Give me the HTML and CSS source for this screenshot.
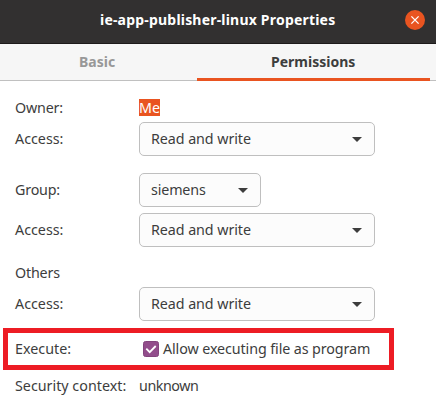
FILE: index.html
```
<!DOCTYPE html>
<html lang="en">
<head>
<meta charset="utf-8">
<title>ie-app-publisher-linux Properties</title>
<link rel="stylesheet" href="styles.css">
</head>
<body>
<header class="titlebar">
  <h1 class="title">ie-app-publisher-linux Properties</h1>
  <button class="close" aria-label="Close"><svg width="20" height="20" viewBox="0 0 20 20"><path d="M6.4 6.4l7.2 7.2M13.6 6.4l-7.2 7.2" stroke="#fff" stroke-width="1.3" fill="none"/></svg></button>
</header>
<nav class="tabs">
  <div class="tab"><span class="basic">Basic</span></div>
  <div class="tab active"><span>Permissions</span></div>
</nav>
<main class="form">
  <div class="row text"><span class="label owner">Owner:</span><span class="selected">Me</span></div>
  <div class="row"><span class="label access">Access:</span><div class="select"><span class="rw">Read and write</span><svg class="arrow" width="10" height="5" viewBox="0 0 10 5"><path d="M0 0h10L5 5z"/></svg></div></div>
  <div class="row section"><span class="label group">Group:</span><div class="select small"><span class="siemens">siemens</span><svg class="arrow" width="10" height="5" viewBox="0 0 10 5"><path d="M0 0h10L5 5z"/></svg></div></div>
  <div class="row"><span class="label access">Access:</span><div class="select"><span class="rw">Read and write</span><svg class="arrow" width="10" height="5" viewBox="0 0 10 5"><path d="M0 0h10L5 5z"/></svg></div></div>
  <div class="row text section"><span class="label others">Others</span></div>
  <div class="row"><span class="label access">Access:</span><div class="select"><span class="rw">Read and write</span><svg class="arrow" width="10" height="5" viewBox="0 0 10 5"><path d="M0 0h10L5 5z"/></svg></div></div>
  <div class="row execute"><span class="label exec">Execute:</span><svg class="check" width="16" height="16" viewBox="0 0 16 16"><rect x=".5" y=".5" width="15" height="15" rx="2" fill="#924d8b" stroke="#83447d"/><path d="M3.3 7.6l3.4 3.5 6-6.1" fill="none" stroke="#fff" stroke-width="1.8"/></svg><span class="allow">Allow executing file as program</span></div>
  <div class="row text"><span class="label context">Security context:</span><span class="unknown">unknown</span></div>
</main>
</body>
</html>
```

FILE: styles.css
```
* { box-sizing: border-box; }
body {
  margin: 0;
  height: 409px;
  overflow: hidden;
  background: #fff;
  color: #3d3d3d;
  font: 14.3px/17px "Noto Sans", "Open Sans", sans-serif;
  white-space: nowrap;
}
.titlebar {
  display: grid;
  grid-template-columns: 1fr 20px;
  align-items: center;
  height: 44px;
  padding: 0 11px 4px 0;
  background: #323030;
  border-bottom: 1px solid #1d1b1b;
}
.title {
  margin: 0 0 0 100px;
  color: #fff;
  font-size: 14px;
  font-weight: 700;
  letter-spacing: .2px;
  line-height: 18px;
}
.close {
  width: 20px;
  height: 20px;
  padding: 0;
  border: 0;
  border-radius: 50%;
  background: #e95420;
}
.close svg { display: block; }
.tabs {
  display: grid;
  grid-template-columns: 197px 233px;
  height: 37px;
  background: #f6f6f6;
  box-shadow: inset 0 -1px #c0c0c0;
  font-size: 14px;
  font-weight: 700;
}
.tab {
  padding: 9px 0 0 79px;
  color: #989898;
}
.tab.active {
  padding-left: 74px;
  color: #3d3d3d;
  border-bottom: 3px solid #e95420;
}
.form {
  display: flex;
  flex-direction: column;
  gap: 6px;
  padding: 18px 0 0;
}
.row {
  display: flex;
  align-items: center;
  height: 34px;
  padding-left: 15px;
}
.row.text { height: 17px; }
.row.section { margin-top: 11px; }
.label { width: 124px; }
.access, .group, .exec, .rw, .siemens, .allow { padding-bottom: 2px; }
.rw { letter-spacing: -.07px; }
.siemens { letter-spacing: -.15px; }
.allow { letter-spacing: -.1px; }
.unknown { letter-spacing: -.45px; }
.others { letter-spacing: -.2px; }
.owner, .group { letter-spacing: -.2px; }
.selected {
  width: 21px;
  background: #e95420;
  color: #fff;
}
.select {
  display: flex;
  align-items: center;
  justify-content: space-between;
  width: 236px;
  height: 34px;
  padding: 0 12px 0 11px;
  border: 1px solid #bfbfbf;
  border-radius: 5px;
  background: #fcfcfc;
}
.select.small { width: 122px; }
.arrow { fill: #3d3d3d; }
.row.execute {
  width: 391px;
  height: 42px;
  margin: 1px 0 1px 3px;
  padding-left: 7px;
  border: 5px solid #ed1c24;
}
.check { margin: 0 4px; }
```
